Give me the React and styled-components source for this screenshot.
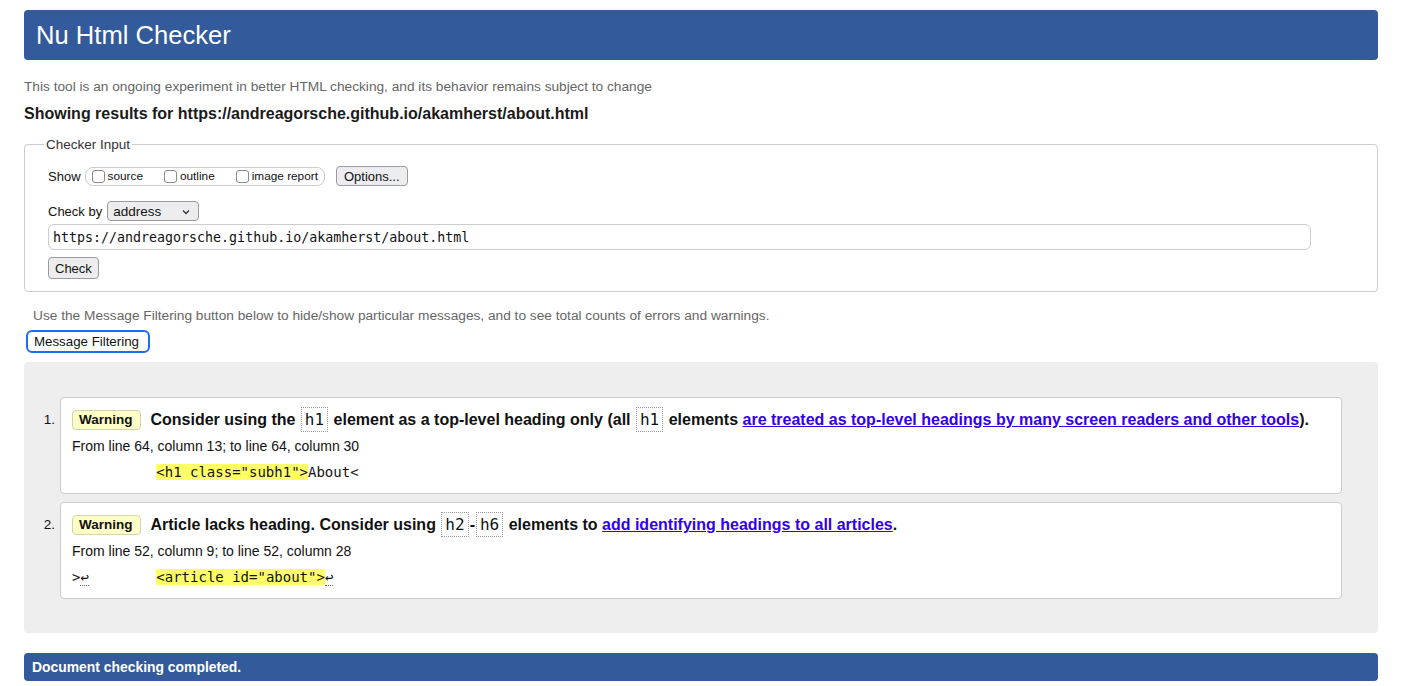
import React from "react";
import styled, { createGlobalStyle } from "styled-components";

const Global = createGlobalStyle`
  html, body { margin: 0; padding: 0; background: #fff; }
  body { font-family: "Liberation Sans", Arial, sans-serif; color: #111; }
`;

const BLUE = "#335a9a";
const MONO = `"DejaVu Sans Mono", "Liberation Mono", monospace`;

const Page = styled.div`
  padding: 10px 0 0 24px;
  width: 1354px;
`;

const Header = styled.h1`
  margin: 0;
  height: 50px;
  box-sizing: border-box;
  background: ${BLUE};
  color: #fff;
  border-radius: 4px;
  padding: 0 12px;
  display: flex;
  align-items: center;
  font-size: 25.6px;
  font-weight: 400;
`;

const Intro = styled.p`
  margin: 19px 0 0;
  font-size: 13.7px;
  line-height: 15px;
  color: #666;
`;

const Showing = styled.h2`
  margin: 11px 0 0;
  font-size: 16px;
  line-height: 18px;
  font-weight: 700;
  color: #1a1a1a;
`;

const Fieldset = styled.fieldset`
  margin: 14px 0 0;
  border: 1px solid #ccc;
  border-radius: 4px;
  padding: 14px 23px 12px;
  min-width: 0;
`;

const Legend = styled.legend`
  font-size: 13.5px;
  line-height: 15px;
  color: #333;
  padding: 0 2px;
  margin-left: -4px;
`;

const Row = styled.div`
  display: flex;
  align-items: center;
  height: ${(p) => p.$h || 20}px;
  margin-top: ${(p) => p.$mt || 0}px;
  font-size: 13px;
`;

const Label = styled.span`
  font-size: 13px;
  color: #111;
  margin-right: ${(p) => p.$mr || 0}px;
`;

const Pill = styled.div`
  display: flex;
  align-items: center;
  height: 19px;
  box-sizing: border-box;
  border: 1px solid #ccc;
  border-radius: 8px;
  padding: 0 6px 0 6px;
  margin-right: 11px;
`;

const CheckItem = styled.label`
  display: flex;
  align-items: center;
  gap: 3px;
  font-size: 11.8px;
  color: #111;
  margin-right: ${(p) => p.$mr || 0}px;
`;

const Box = styled.input.attrs({ type: "checkbox" })`
  appearance: none;
  margin: 0;
  width: 13px;
  height: 13px;
  box-sizing: border-box;
  border: 1px solid #8a8a8f;
  border-radius: 3px;
  background: #fff;
`;

const Button = styled.button`
  font-family: "Liberation Sans", Arial, sans-serif;
  font-size: 13px;
  color: #111;
  height: ${(p) => p.$h || 20}px;
  box-sizing: border-box;
  padding: 0 ${(p) => p.$px || 7}px;
  background: #ededf0;
  border: 1px solid #9a9aa0;
  border-radius: 4px;
  line-height: 1;
`;

const SelectBox = styled.div`
  position: relative;
  display: flex;
  align-items: center;
  width: 92px;
  height: 20px;
  box-sizing: border-box;
  background: #ededf0;
  border: 1px solid #9a9aa0;
  border-radius: 4px;
`;

const Select = styled.select`
  appearance: none;
  border: 0;
  background: transparent;
  font-family: "Liberation Sans", Arial, sans-serif;
  font-size: 13.5px;
  color: #111;
  width: 100%;
  height: 100%;
  padding: 0 0 0 5px;
  outline: none;
`;

const Chevron = styled.svg`
  position: absolute;
  right: 8px;
  top: 7px;
  pointer-events: none;
`;

const UrlInput = styled.input`
  display: block;
  margin-top: 3px;
  width: 1263px;
  height: 26px;
  box-sizing: border-box;
  border: 1px solid #ccc;
  border-radius: 6px;
  padding: 0 4px;
  font-family: ${MONO};
  font-size: 13.3px;
  color: #111;
  outline: none;
`;

const CheckRow = styled.div`
  margin-top: 7px;
`;

const FilterNote = styled.p`
  margin: 16px 0 0 9px;
  font-size: 13.7px;
  line-height: 15px;
  color: #666;
`;

const FilterButton = styled.button`
  display: block;
  margin: 7px 0 0 2px;
  height: 23px;
  width: 124px;
  box-sizing: border-box;
  background: #fff;
  border: 2px solid #1a6ff0;
  border-radius: 6px;
  padding: 0 6px;
  font-family: "Liberation Sans", Arial, sans-serif;
  font-size: 13.3px;
  color: #111;
  text-align: left;
`;

const Results = styled.div`
  margin-top: 9px;
  background: #eee;
  border-radius: 4px;
  padding: 35px 36px 34px 0;
  display: flex;
  flex-direction: column;
  gap: 8px;
`;

const Item = styled.div`
  display: flex;
  align-items: flex-start;
`;

const Num = styled.div`
  width: 36px;
  box-sizing: border-box;
  padding: 15px 5px 0 0;
  text-align: right;
  font-size: 13.5px;
  line-height: 15px;
  color: #111;
`;

const Card = styled.div`
  flex: 1;
  background: #fff;
  border: 1px solid #ccc;
  border-radius: 4px;
  padding: 12px 11px 12px;
`;

const MessageLine = styled.div`
  display: flex;
  align-items: center;
  gap: 10px;
`;

const Badge = styled.span`
  display: inline-block;
  height: 20px;
  box-sizing: border-box;
  line-height: 18px;
  padding: 0 7px 0 6px;
  background: #ffffc8;
  border: 1px solid #d4d3b0;
  border-radius: 4px;
  font-size: 13.5px;
  font-weight: 700;
  color: #111;
`;

const MessageText = styled.span`
  font-size: 16px;
  line-height: 20px;
  font-weight: 700;
  color: #111;
`;

const Code = styled.code`
  font-family: ${MONO};
  font-weight: 400;
  font-size: 16px;
  padding: 2px 3px;
  margin: 0 1px;
  border: 1px dotted #999;
`;

const Link = styled.a`
  color: #3300ee;
  text-decoration: underline;
`;

const Location = styled.p`
  margin: 8px 0 0;
  font-size: 14px;
  line-height: 16px;
  color: #111;
`;

const Extract = styled.p`
  margin: 9px 0 0;
  font-family: ${MONO};
  font-size: 14px;
  line-height: 18px;
  white-space: pre;
  color: #111;
`;

const Mark = styled.mark`
  background: #ffff66;
  color: #111;
`;

const Lf = styled.abbr`
  text-decoration: none;
  border-bottom: 1px dotted #666;
`;

const Footer = styled.div`
  margin-top: 20px;
  height: 28px;
  box-sizing: border-box;
  background: ${BLUE};
  border-radius: 4px;
  padding: 0 8px;
  display: flex;
  align-items: center;
  color: #fff;
  font-size: 13.9px;
  font-weight: 700;
`;

export default function App() {
  return (
    <>
      <Global />
      <Page>
        <Header>Nu Html Checker</Header>
        <Intro>
          This tool is an ongoing experiment in better HTML checking, and its behavior remains subject to change
        </Intro>
        <Showing>Showing results for https://andreagorsche.github.io/akamherst/about.html</Showing>

        <Fieldset>
          <Legend>Checker Input</Legend>
          <Row>
            <Label $mr={4}>Show</Label>
            <Pill>
              <CheckItem $mr={21}>
                <Box />
                source
              </CheckItem>
              <CheckItem $mr={21}>
                <Box />
                outline
              </CheckItem>
              <CheckItem>
                <Box />
                image report
              </CheckItem>
            </Pill>
            <Button>Options...</Button>
          </Row>
          <Row $mt={15}>
            <Label $mr={5}>Check by</Label>
            <SelectBox>
              <Select defaultValue="address">
                <option value="address">address</option>
                <option value="file">file upload</option>
                <option value="text">text input</option>
              </Select>
              <Chevron width="8" height="6" viewBox="0 0 8 6">
                <path d="M1 1.5 L4 4.5 L7 1.5" fill="none" stroke="#333" strokeWidth="1.3" />
              </Chevron>
            </SelectBox>
          </Row>
          <UrlInput defaultValue="https://andreagorsche.github.io/akamherst/about.html" />
          <CheckRow>
            <Button $h={22} $px={6}>Check</Button>
          </CheckRow>
        </Fieldset>

        <FilterNote>
          Use the Message Filtering button below to hide/show particular messages, and to see total counts of errors and warnings.
        </FilterNote>
        <FilterButton>Message Filtering</FilterButton>

        <Results>
          <Item>
            <Num>1.</Num>
            <Card>
              <MessageLine>
                <Badge>Warning</Badge>
                <MessageText>
                  Consider using the <Code>h1</Code> element as a top-level heading only (all <Code>h1</Code> elements{" "}
                  <Link href="#">are treated as top-level headings by many screen readers and other tools</Link>).
                </MessageText>
              </MessageLine>
              <Location>From line 64, column 13; to line 64, column 30</Location>
              <Extract>
                {"          "}
                <Mark>{'<h1 class="subh1">'}</Mark>
                {"About<"}
              </Extract>
            </Card>
          </Item>
          <Item>
            <Num>2.</Num>
            <Card>
              <MessageLine>
                <Badge>Warning</Badge>
                <MessageText>
                  Article lacks heading. Consider using <Code>h2</Code>-<Code>h6</Code> elements to{" "}
                  <Link href="#">add identifying headings to all articles</Link>.
                </MessageText>
              </MessageLine>
              <Location>From line 52, column 9; to line 52, column 28</Location>
              <Extract>
                {">"}
                <Lf title="line break">↩</Lf>
                {"        "}
                <Mark>{'<article id="about">'}</Mark>
                <Lf title="line break">↩</Lf>
              </Extract>
            </Card>
          </Item>
        </Results>

        <Footer>Document checking completed.</Footer>
      </Page>
    </>
  );
}
